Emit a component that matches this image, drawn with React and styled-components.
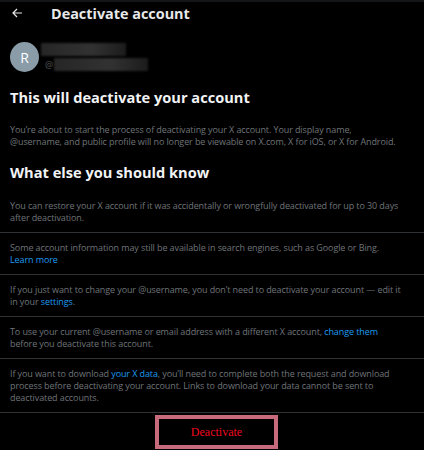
import React from 'react';
import styled, { createGlobalStyle } from 'styled-components';

const GlobalStyle = createGlobalStyle`
  html, body {
    margin: 0;
    padding: 0;
    background: #000;
  }
  body {
    font-family: "Open Sans", "Noto Sans", sans-serif;
    -webkit-font-smoothing: antialiased;
  }
`;

const Page = styled.div`
  width: 424px;
  height: 450px;
  overflow: hidden;
  background: #000;
  color: #e7e9ea;
  border-top: 2px solid #141516;
  box-sizing: border-box;
`;

const Header = styled.div`
  display: flex;
  align-items: center;
  height: 22px;
  padding: 0 10px;
  gap: 27px;
`;

const BackButton = styled.button`
  background: none;
  border: 0;
  padding: 0;
  width: 14px;
  height: 14px;
  display: flex;
  align-items: center;
  justify-content: center;
  color: #e7e9ea;
`;

const Title = styled.h1`
  margin: 0;
  font-size: 14.4px;
  font-weight: 700;
`;

const UserRow = styled.div`
  display: flex;
  align-items: center;
  padding: 18px 10px 0;
  gap: 2px;
`;

const Avatar = styled.div`
  width: 29px;
  height: 30px;
  border-radius: 50%;
  background: #8a9ca8;
  color: #fff;
  display: flex;
  align-items: center;
  justify-content: center;
  font-size: 14px;
  font-weight: 500;
`;

const UserNames = styled.div`
  display: flex;
  flex-direction: column;
  gap: 2px;
`;

const Blur = styled.div`
  height: 13px;
  width: ${p => p.$w}px;
  background: linear-gradient(90deg, #262626, #323232 60%, #1c1c1c);
  filter: blur(1px);
`;

const HandleRow = styled.div`
  display: flex;
  align-items: center;
  gap: 1px;
  padding-left: 4px;
  color: #555;
  font-size: 9px;
`;

const Heading = styled.h2`
  margin: 0;
  padding: ${p => p.$pad};
  font-size: 14.6px;
  font-weight: 700;
  color: #f2f3f4;
`;

const Para = styled.p`
  margin: 0;
  padding: 0 0 0 10px;
  font-size: 9px;
  line-height: 12px;
  letter-spacing: -0.1px;
  white-space: nowrap;
  color: #6f7479;
`;

const Section = styled.div`
  padding: ${p => (p.$first ? '18px' : '9px')} 0 8px 10px;
  border-bottom: 1px solid #2f3336;
  font-size: 9px;
  line-height: 12px;
  letter-spacing: -0.1px;
  white-space: nowrap;
  color: #6f7479;
`;

const Link = styled.a`
  color: #1d9bf0;
  text-decoration: none;
`;

const Footer = styled.div`
  display: flex;
  justify-content: center;
  padding-top: 2px;
`;

const DeactivateButton = styled.button`
  width: 123px;
  height: 34px;
  margin-left: 9px;
  background: #000;
  border: 4px solid #c76a7c;
  color: #f0081f;
  font-family: "Liberation Serif", serif;
  font-size: 12px;
  padding: 0;
`;

const sections = [
  <>You can restore your X account if it was accidentally or wrongfully deactivated for up to 30 days<br />after deactivation.</>,
  <>Some account information may still be available in search engines, such as Google or Bing.<br /><Link href="#">Learn more</Link></>,
  <>If you just want to change your @username, you don’t need to deactivate your account — edit it<br />in your <Link href="#">settings</Link>.</>,
  <>To use your current @username or email address with a different X account, <Link href="#">change them</Link><br />before you deactivate this account.</>,
  <>If you want to download <Link href="#">your X data</Link>, you’ll need to complete both the request and download<br />process before deactivating your account. Links to download your data cannot be sent to<br />deactivated accounts.</>,
];

const App = () => {
  return (
    <>
      <GlobalStyle />
      <Page>
        <Header>
          <BackButton aria-label="Back">
            <svg width="13" height="12" viewBox="0 0 24 24" fill="none" stroke="currentColor" strokeWidth="2.4">
              <path d="M21 12H4M11 4l-8 8 8 8" />
            </svg>
          </BackButton>
          <Title>Deactivate account</Title>
        </Header>
        <UserRow>
          <Avatar>R</Avatar>
          <UserNames>
            <Blur $w={85} />
            <HandleRow>
              @<Blur $w={94} />
            </HandleRow>
          </UserNames>
        </UserRow>
        <Heading $pad="15px 10px 17px">This will deactivate your account</Heading>
        <Para>
          You’re about to start the process of deactivating your X account. Your display name,<br />
          @username, and public profile will no longer be viewable on X.com, X for iOS, or X for Android.
        </Para>
        <Heading $pad="14px 10px 0">What else you should know</Heading>
        {sections.map((s, i) => (
          <Section key={i} $first={i === 0}>{s}</Section>
        ))}
        <Footer>
          <DeactivateButton>Deactivate</DeactivateButton>
        </Footer>
      </Page>
    </>
  );
};

export default App;
